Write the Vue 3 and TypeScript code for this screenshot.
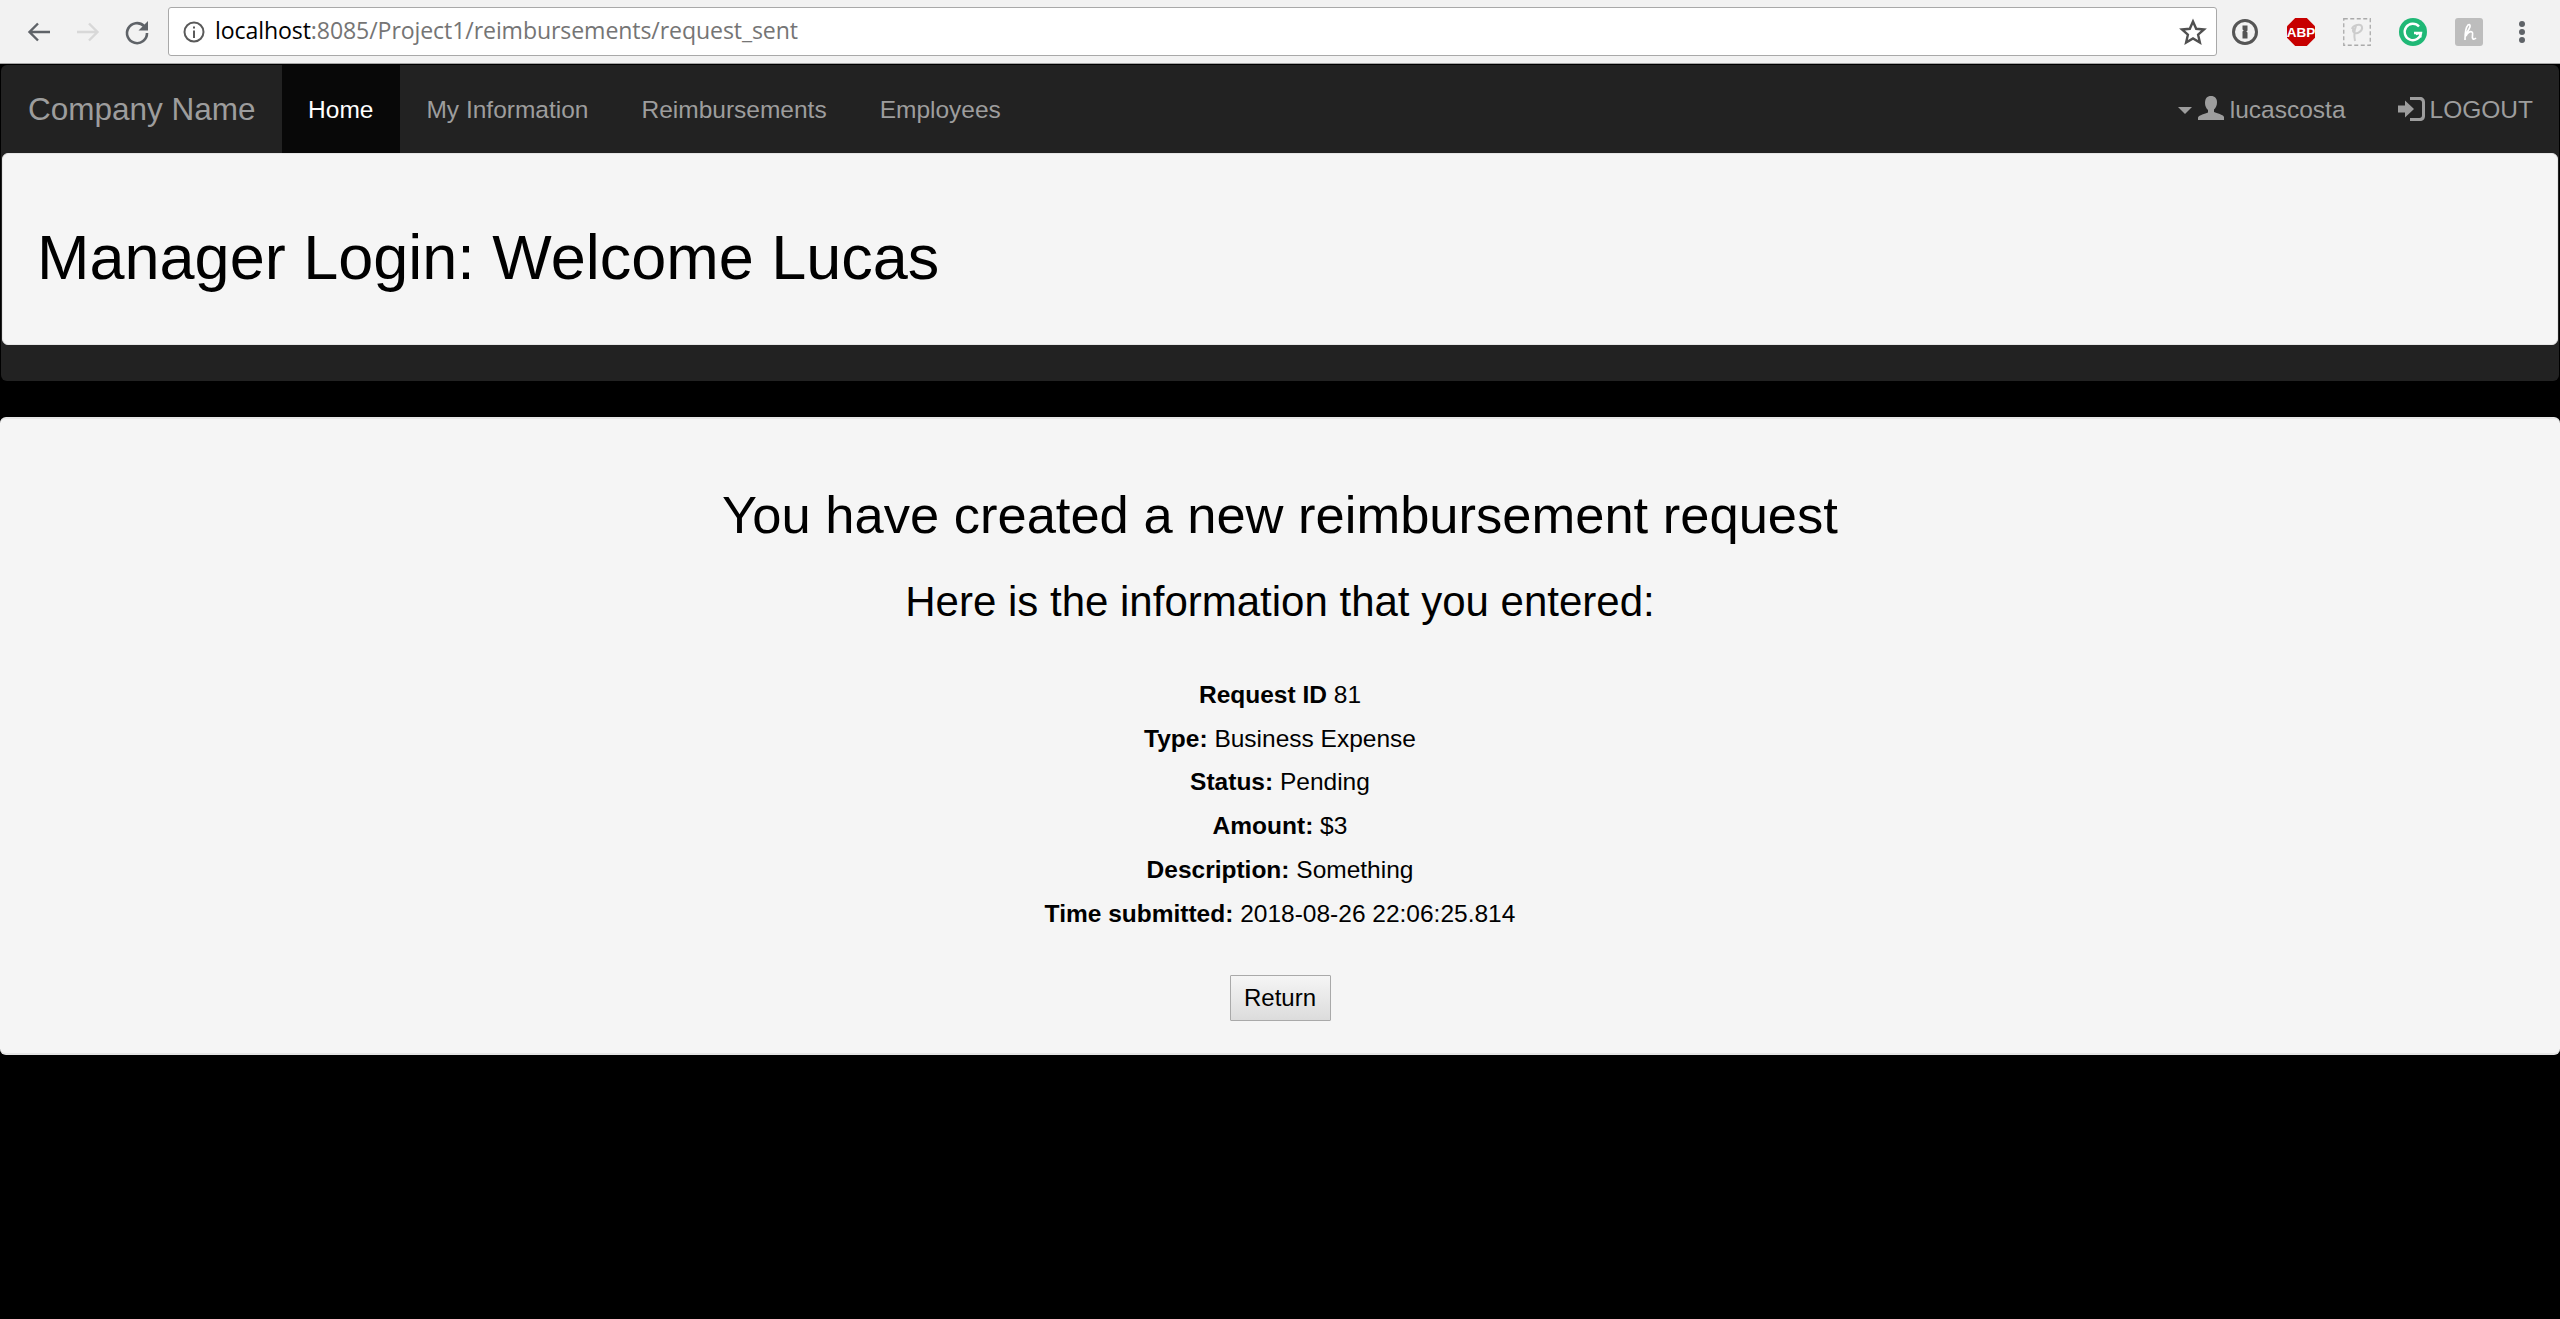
<script setup lang="ts">
const navLinks = ["My Information", "Reimbursements", "Employees"];

const details = [
  { label: "Request ID", value: "81" },
  { label: "Type:", value: "Business Expense" },
  { label: "Status:", value: "Pending" },
  { label: "Amount:", value: "$3" },
  { label: "Description:", value: "Something" },
  { label: "Time submitted:", value: "2018-08-26 22:06:25.814" },
];
</script>

<template>
  <div class="page">
    <!-- browser toolbar -->
    <div class="chrome">
      <div class="nav-btns">
        <svg class="btn-icon" viewBox="0 0 28 28" fill="none" stroke="#5f6368" stroke-width="2.4">
          <path d="M25 14H5M13 5.5L4.5 14l8.5 8.5" />
        </svg>
        <svg class="btn-icon" viewBox="0 0 28 28" fill="none" stroke="#d8d8d8" stroke-width="2.4">
          <path d="M3 14h20M15 5.5l8.5 8.5-8.5 8.5" />
        </svg>
        <svg class="btn-icon" viewBox="0 0 28 28" fill="none" stroke="#5f6368" stroke-width="2.6">
          <path d="M21 8A10 10 0 1 0 24 15" />
          <path d="M25 3v9.500h-9.500z" fill="#5f6368" stroke="none" />
        </svg>
      </div>
      <div class="omnibox">
        <svg class="info" viewBox="0 0 24 24" fill="none" stroke="#5a5a5a" stroke-width="2">
          <circle cx="12" cy="12" r="9.5" />
          <path d="M12 10.500V18M12 6.500v2" />
        </svg>
        <span class="url"><span class="host">localhost</span>:8085/Project1/reimbursements/request_sent</span>
        <svg class="star" viewBox="0 0 28 28" fill="none" stroke="#505050" stroke-width="2.4">
          <path d="M14 3.500l3.200 7.300 7.800.7-5.900 5.200 1.800 7.800L14 20.400l-6.900 4.100 1.800-7.800L3 11.500l7.800-.7z" />
        </svg>
      </div>
      <div class="extensions">
        <svg class="ext" viewBox="0 0 28 28">
          <circle cx="14" cy="14" r="11.5" fill="none" stroke="#555" stroke-width="3" />
          <path d="M11.500 7.500h5v5l-1.200 1 1.200 1v6h-5v-7l1.200-1-1.200-1z" fill="#555" />
        </svg>
        <svg class="ext" viewBox="0 0 28 28">
          <path d="M8.200 0h11.600L28 8.200v11.600L19.800 28H8.200L0 19.800V8.200z" fill="#c70000" />
          <text x="14" y="19" text-anchor="middle" class="abp">ABP</text>
        </svg>
        <svg class="ext" viewBox="0 0 28 28" fill="none">
          <rect x=".75" y=".75" width="26.5" height="26.5" stroke="#aaa" stroke-width="1.3" stroke-dasharray="4 2.5" />
          <path d="M12 23c-1-5-1-10 1-15M9 11c1-4 9-6 10-2s-5 7-7 6c-2-.5-3-3-1-5" stroke="#ccc" stroke-width="2" />
        </svg>
        <svg class="ext" viewBox="0 0 28 28" fill="none">
          <circle cx="14" cy="14" r="14" fill="#1fb876" />
          <path d="M20 8.500A8.200 8.200 0 1 0 22 15h-7" stroke="#fff" stroke-width="2.4" />
          <path d="M22 19.500l-1-4.500-4 1.500" stroke="#fff" stroke-width="1.500" />
        </svg>
        <svg class="ext" viewBox="0 0 28 28" fill="none">
          <rect width="28" height="28" rx="3" fill="#bdbdbd" />
          <path d="M10 22c0-6 1-13 3-15 2-1.500 3 1 1 4s-3 6-4 8M11 18c1-3 4-5 6-4s-1 5 1 7c1 .5 2 0 3-1" stroke="#fff" stroke-width="1.7" />
        </svg>
        <div class="dots"><i></i><i></i><i></i></div>
      </div>
    </div>

    <!-- navbar with the welcome jumbotron inside -->
    <div class="navbar">
      <div class="nav-row">
        <a class="brand">Company Name</a>
        <a class="nav-link active">Home</a>
        <a v-for="link in navLinks" :key="link" class="nav-link">{{ link }}</a>
        <div class="nav-right">
          <a class="nav-link user">
            <span class="caret"></span>
            <svg class="glyph user-glyph" viewBox="0 0 26 26" fill="#9d9d9d">
              <path d="M13 1c4 0 6 2.500 6 6.500 0 3-1.300 5.500-3 7v2.500c3 1.300 9 2.500 10 5V25H0v-2.500c1-2.500 7-3.700 10-5v-2.500c-1.700-1.500-3-4-3-7C7 3.500 9 1 13 1z" />
            </svg>
            lucascosta
          </a>
          <a class="nav-link logout">
            <svg class="glyph login-glyph" viewBox="0 0 28 26" fill="#9d9d9d">
              <path d="M0 9.500h7V4.500l9 8.500-9 8.500v-5H0z" />
              <path d="M12 1h10c3 0 5 2 5 5v14c0 3-2 5-5 5H12v-3h9.500c1.500 0 2.500-1 2.500-2.500v-13C24 5 23 4 21.500 4H12z" />
            </svg>LOGOUT
          </a>
        </div>
      </div>
      <div class="jumbotron">
        <h1>Manager Login: Welcome Lucas</h1>
      </div>
    </div>

    <!-- confirmation card -->
    <div class="card">
      <h2>You have created a new reimbursement request</h2>
      <h3>Here is the information that you entered:</h3>
      <p v-for="row in details" :key="row.label"><b>{{ row.label }}</b> {{ row.value }}</p>
      <button class="return-btn">Return</button>
    </div>
  </div>
</template>

<style>
html,
body {
  margin: 0;
  background: #000;
}
</style>

<style scoped>
.page {
  min-height: 1319px;
  background: #000;
  font-family: "Liberation Sans", Arial, sans-serif;
  color: #000;
}

.chrome {
  display: flex;
  align-items: center;
  height: 63px;
  background: #f2f2f2;
  border-bottom: 1px solid #a6a6a6;
}

.nav-btns {
  display: flex;
  align-items: center;
  width: 168px;
  padding-left: 25px;
  gap: 21px;
  box-sizing: border-box;
}

.btn-icon {
  width: 28px;
  height: 28px;
}

.omnibox {
  display: flex;
  align-items: center;
  width: 2049px;
  height: 49px;
  box-sizing: border-box;
  background: #fff;
  border: 1px solid #a9a9a9;
  border-radius: 3px;
  padding: 0 9px 0 13px;
}

.info {
  width: 24px;
  height: 24px;
  margin-right: 9px;
}

.url {
  flex: 1;
  padding-bottom: 3px;
  font-family: "Open Sans", sans-serif;
  font-size: 23.1px;
  letter-spacing: -0.1px;
  color: #757575;
}

.host {
  color: #000;
}

.star {
  width: 28px;
  height: 28px;
}

.extensions {
  display: flex;
  align-items: center;
  gap: 28px;
  padding-left: 14px;
}

.ext {
  width: 28px;
  height: 28px;
}

.abp {
  font-family: "Liberation Sans", sans-serif;
  font-weight: 700;
  font-size: 13.5px;
  fill: #fff;
}

.dots {
  display: flex;
  flex-direction: column;
  gap: 2px;
  margin-left: 8px;
}

.dots i {
  width: 6px;
  height: 6px;
  border-radius: 50%;
  background: #5f6368;
}

.navbar {
  margin: 1px 1px 36px;
  background: #222;
  border-radius: 6px;
  height: 316px;
}

.nav-row {
  display: flex;
  height: 88px;
  font-size: 24.5px;
  color: #9d9d9d;
}

.brand {
  display: flex;
  align-items: center;
  padding: 0 26px 0 27px;
  font-size: 31.5px;
}

.nav-link {
  display: flex;
  align-items: center;
  padding: 2px 26.5px 0;
}

.nav-link.active {
  background: #080808;
  color: #fff;
}

.nav-right {
  display: flex;
  margin-left: auto;
}

.user {
  padding-right: 0;
}

.logout {
  padding-right: 26px;
  padding-left: 52px;
}

.caret {
  width: 0;
  height: 0;
  border-left: 7px solid transparent;
  border-right: 7px solid transparent;
  border-top: 7px solid #9d9d9d;
  margin-right: 6px;
}

.glyph {
  flex: none;
}

.user-glyph {
  width: 26px;
  height: 26px;
  margin-right: 6px;
  margin-top: -4px;
}

.login-glyph {
  width: 28px;
  height: 26px;
  margin-right: 4px;
  margin-top: -2px;
}

.jumbotron {
  height: 192px;
  box-sizing: border-box;
  background: #f5f5f5;
  border: 1px solid #e6e6e6;
  border-radius: 6px;
  margin: 0 1px;
  padding: 15px 0 0 34px;
  display: flex;
  align-items: center;
}

h1 {
  margin: 0;
  font-weight: 400;
  font-size: 63px;
}

.card {
  display: flex;
  flex-direction: column;
  align-items: center;
  height: 638px;
  box-sizing: border-box;
  background: #f5f5f5;
  border-top: 2px solid #e6e6e6;
  border-bottom: 2px solid #e6e6e6;
  border-radius: 6px;
  padding-top: 64px;
}

h2 {
  margin: 0;
  font-weight: 400;
  font-size: 52.5px;
  line-height: 64px;
}

h3 {
  margin: 30px 0 52px;
  font-weight: 400;
  font-size: 42px;
  line-height: 50px;
}

p {
  margin: 0 0 11px;
  font-size: 24.5px;
  line-height: 32.7px;
}

.return-btn {
  margin-top: 34px;
  width: 101px;
  height: 46px;
  padding: 0;
  font-family: inherit;
  font-size: 24px;
  color: #000;
  background: linear-gradient(#f5f5f5, #dcdcdc);
  border: 1px solid #a9a9a9;
  border-radius: 1px;
}
</style>
